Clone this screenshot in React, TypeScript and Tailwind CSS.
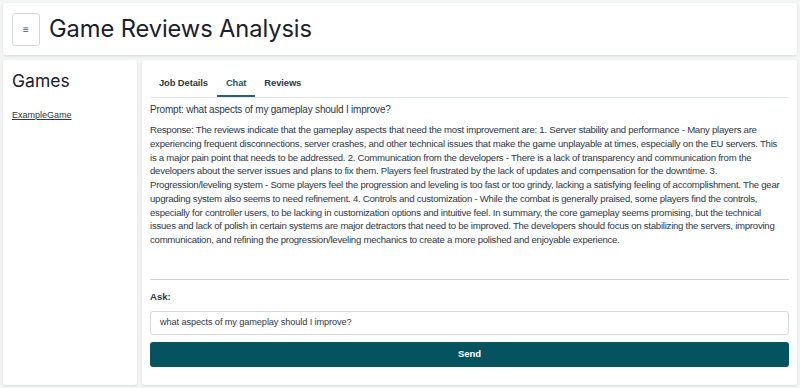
import React from "react";

const response =
  "Response: The reviews indicate that the gameplay aspects that need the most improvement are: 1. Server stability and performance - Many players are experiencing frequent disconnections, server crashes, and other technical issues that make the game unplayable at times, especially on the EU servers. This is a major pain point that needs to be addressed. 2. Communication from the developers - There is a lack of transparency and communication from the developers about the server issues and plans to fix them. Players feel frustrated by the lack of updates and compensation for the downtime. 3. Progression/leveling system - Some players feel the progression and leveling is too fast or too grindy, lacking a satisfying feeling of accomplishment. The gear upgrading system also seems to need refinement. 4. Controls and customization - While the combat is generally praised, some players find the controls, especially for controller users, to be lacking in customization options and intuitive feel. In summary, the core gameplay seems promising, but the technical issues and lack of polish in certain systems are major detractors that need to be improved. The developers should focus on stabilizing the servers, improving communication, and refining the progression/leveling mechanics to create a more polished and enjoyable experience.";

export default function App() {
  return (
    <div
      className="w-[800px] h-[388px] bg-[#f4f5f5] text-[#1a202c] overflow-hidden flex flex-col gap-[5px] p-[3px]"
      style={{ fontFamily: "'Liberation Sans', Arial, sans-serif" }}
    >
      <header className="h-[52px] shrink-0 bg-white rounded-[3px] shadow-[0_1px_3px_rgba(0,0,0,0.12)] flex items-center gap-[9px] pl-[9px]">
        <button className="w-[28px] h-[33px] border border-[#d4d7dc] rounded-[3px] bg-white flex items-center justify-center text-[10px] text-[#4a5568]">
          ≡
        </button>
        <h1
          className="text-[23.7px] leading-none tracking-[-0.1px] text-[#1a202c]"
          style={{ fontFamily: "Inter, sans-serif" }}
        >
          Game Reviews Analysis
        </h1>
      </header>
      <div className="flex gap-[5px] flex-1 min-h-0">
        <aside className="w-[134px] shrink-0 bg-white rounded-[3px] shadow-[0_1px_3px_rgba(0,0,0,0.12)] px-[9px] pt-[9px]">
          <h2 className="text-[17.5px] leading-[24px] text-[#1a202c]" style={{ fontFamily: "Inter, sans-serif" }}>
            Games
          </h2>
          <a className="block mt-[16px] text-[9px] underline text-[#2d3748]">ExampleGame</a>
        </aside>
        <main className="flex-1 min-w-0 bg-white rounded-[3px] shadow-[0_1px_3px_rgba(0,0,0,0.12)] px-[8px] pt-[11px] flex flex-col">
          <div className="flex border-b border-[#e2e8f0] text-[9.4px] font-bold text-[#2d3748] tracking-[-0.1px]">
            <div className="px-[9px] pb-[6px] pt-[5px]">Job Details</div>
            <div className="px-[9px] pb-[5px] pt-[5px] border-b-2 border-[#2c6275] text-[#2c5262]">Chat</div>
            <div className="px-[9px] pb-[6px] pt-[5px]">Reviews</div>
          </div>
          <div className="flex-1 min-h-0 text-[#2d3748] pt-[5px]">
            <p className="text-[10px] leading-[13.75px] tracking-[-0.2px]">
              Prompt: what aspects of my gameplay should I improve?
            </p>
            <p className="mt-[6.25px] pr-[4px] text-[9.6px] leading-[13.75px] tracking-[-0.25px]">{response}</p>
          </div>
          <div className="border-t border-[#cbd0d6]" />
          <div className="text-[9.6px] leading-[15px] font-bold text-[#2d3748] mt-[9px]">Ask:</div>
          <div className="mt-[7px] h-[24px] shrink-0 border border-[#d4d7dc] rounded-[3px] flex items-center px-[9px] text-[9.2px] tracking-[-0.1px] text-[#2d3748]">
            what aspects of my gameplay should I improve?
          </div>
          <button className="mt-[7px] mb-[18px] h-[25px] shrink-0 rounded-[3px] bg-[#04535f] text-white text-[9.5px] font-bold">
            Send
          </button>
        </main>
      </div>
    </div>
  );
}
